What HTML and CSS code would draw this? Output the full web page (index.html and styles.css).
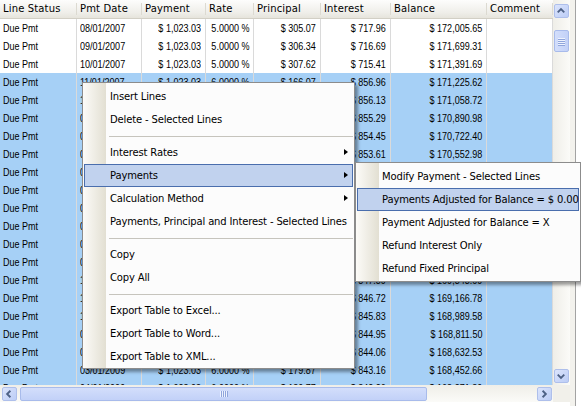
FILE: index.html
```html
<!DOCTYPE html>
<html>
<head>
<meta charset="utf-8">
<link rel="stylesheet" href="styles.css">
</head>
<body>
<div class="screen">
  <div class="grid">
    <div class="main">
      <div class="table">
        <div class="cols hdr">
          <span>Line Status</span><span>Pmt Date</span><span>Payment</span><span>Rate</span><span>Principal</span><span>Interest</span><span>Balance</span><span>Comment</span>
        </div>
        <div class="cols row"><span><b>Due Pmt</b></span><span><b>08/01/2007</b></span><span class="r"><b>$ 1,023.03</b></span><span class="r"><b>5.0000 %</b></span><span class="r"><b>$ 305.07</b></span><span class="r"><b>$ 717.96</b></span><span class="r"><b>$ 172,005.65</b></span><span></span></div>
        <div class="cols row"><span><b>Due Pmt</b></span><span><b>09/01/2007</b></span><span class="r"><b>$ 1,023.03</b></span><span class="r"><b>5.0000 %</b></span><span class="r"><b>$ 306.34</b></span><span class="r"><b>$ 716.69</b></span><span class="r"><b>$ 171,699.31</b></span><span></span></div>
        <div class="cols row"><span><b>Due Pmt</b></span><span><b>10/01/2007</b></span><span class="r"><b>$ 1,023.03</b></span><span class="r"><b>5.0000 %</b></span><span class="r"><b>$ 307.62</b></span><span class="r"><b>$ 715.41</b></span><span class="r"><b>$ 171,391.69</b></span><span></span></div>
        <div class="cols row sel"><span><b>Due Pmt</b></span><span><b>11/01/2007</b></span><span class="r"><b>$ 1,023.03</b></span><span class="r"><b>6.0000 %</b></span><span class="r"><b>$ 166.07</b></span><span class="r"><b>$ 856.96</b></span><span class="r"><b>$ 171,225.62</b></span><span></span></div>
        <div class="cols row sel"><span><b>Due Pmt</b></span><span><b>12/01/2007</b></span><span class="r"><b>$ 1,023.03</b></span><span class="r"><b>6.0000 %</b></span><span class="r"><b>$ 166.90</b></span><span class="r"><b>$ 856.13</b></span><span class="r"><b>$ 171,058.72</b></span><span></span></div>
        <div class="cols row sel"><span><b>Due Pmt</b></span><span><b>01/01/2008</b></span><span class="r"><b>$ 1,023.03</b></span><span class="r"><b>6.0000 %</b></span><span class="r"><b>$ 167.74</b></span><span class="r"><b>$ 855.29</b></span><span class="r"><b>$ 170,890.98</b></span><span></span></div>
        <div class="cols row sel"><span><b>Due Pmt</b></span><span><b>02/01/2008</b></span><span class="r"><b>$ 1,023.03</b></span><span class="r"><b>6.0000 %</b></span><span class="r"><b>$ 168.58</b></span><span class="r"><b>$ 854.45</b></span><span class="r"><b>$ 170,722.40</b></span><span></span></div>
        <div class="cols row sel"><span><b>Due Pmt</b></span><span><b>03/01/2008</b></span><span class="r"><b>$ 1,023.03</b></span><span class="r"><b>6.0000 %</b></span><span class="r"><b>$ 169.42</b></span><span class="r"><b>$ 853.61</b></span><span class="r"><b>$ 170,552.98</b></span><span></span></div>
        <div class="cols row sel"><span><b>Due Pmt</b></span><span><b>04/01/2008</b></span><span class="r"><b>$ 1,023.03</b></span><span class="r"><b>6.0000 %</b></span><span class="r"><b>$ 170.27</b></span><span class="r"><b>$ 852.76</b></span><span class="r"><b>$ 170,382.71</b></span><span></span></div>
        <div class="cols row sel"><span><b>Due Pmt</b></span><span><b>05/01/2008</b></span><span class="r"><b>$ 1,023.03</b></span><span class="r"><b>6.0000 %</b></span><span class="r"><b>$ 171.12</b></span><span class="r"><b>$ 851.91</b></span><span class="r"><b>$ 170,211.59</b></span><span></span></div>
        <div class="cols row sel"><span><b>Due Pmt</b></span><span><b>06/01/2008</b></span><span class="r"><b>$ 1,023.03</b></span><span class="r"><b>6.0000 %</b></span><span class="r"><b>$ 171.97</b></span><span class="r"><b>$ 851.06</b></span><span class="r"><b>$ 170,039.62</b></span><span></span></div>
        <div class="cols row sel"><span><b>Due Pmt</b></span><span><b>07/01/2008</b></span><span class="r"><b>$ 1,023.03</b></span><span class="r"><b>6.0000 %</b></span><span class="r"><b>$ 172.83</b></span><span class="r"><b>$ 850.20</b></span><span class="r"><b>$ 169,866.79</b></span><span></span></div>
        <div class="cols row sel"><span><b>Due Pmt</b></span><span><b>08/01/2008</b></span><span class="r"><b>$ 1,023.03</b></span><span class="r"><b>6.0000 %</b></span><span class="r"><b>$ 173.70</b></span><span class="r"><b>$ 849.33</b></span><span class="r"><b>$ 169,693.09</b></span><span></span></div>
        <div class="cols row sel"><span><b>Due Pmt</b></span><span><b>09/01/2008</b></span><span class="r"><b>$ 1,023.03</b></span><span class="r"><b>6.0000 %</b></span><span class="r"><b>$ 174.56</b></span><span class="r"><b>$ 848.47</b></span><span class="r"><b>$ 169,518.53</b></span><span></span></div>
        <div class="cols row sel"><span><b>Due Pmt</b></span><span><b>10/01/2008</b></span><span class="r"><b>$ 1,023.03</b></span><span class="r"><b>6.0000 %</b></span><span class="r"><b>$ 175.44</b></span><span class="r"><b>$ 847.59</b></span><span class="r"><b>$ 169,343.09</b></span><span></span></div>
        <div class="cols row sel"><span><b>Due Pmt</b></span><span><b>11/01/2008</b></span><span class="r"><b>$ 1,023.03</b></span><span class="r"><b>6.0000 %</b></span><span class="r"><b>$ 176.31</b></span><span class="r"><b>$ 846.72</b></span><span class="r"><b>$ 169,166.78</b></span><span></span></div>
        <div class="cols row sel"><span><b>Due Pmt</b></span><span><b>12/01/2008</b></span><span class="r"><b>$ 1,023.03</b></span><span class="r"><b>6.0000 %</b></span><span class="r"><b>$ 177.20</b></span><span class="r"><b>$ 845.83</b></span><span class="r"><b>$ 168,989.58</b></span><span></span></div>
        <div class="cols row sel"><span><b>Due Pmt</b></span><span><b>01/01/2009</b></span><span class="r"><b>$ 1,023.03</b></span><span class="r"><b>6.0000 %</b></span><span class="r"><b>$ 178.08</b></span><span class="r"><b>$ 844.95</b></span><span class="r"><b>$ 168,811.50</b></span><span></span></div>
        <div class="cols row sel"><span><b>Due Pmt</b></span><span><b>02/01/2009</b></span><span class="r"><b>$ 1,023.03</b></span><span class="r"><b>6.0000 %</b></span><span class="r"><b>$ 178.97</b></span><span class="r"><b>$ 844.06</b></span><span class="r"><b>$ 168,632.53</b></span><span></span></div>
        <div class="cols row sel"><span><b>Due Pmt</b></span><span><b>03/01/2009</b></span><span class="r"><b>$ 1,023.03</b></span><span class="r"><b>6.0000 %</b></span><span class="r"><b>$ 179.87</b></span><span class="r"><b>$ 843.16</b></span><span class="r"><b>$ 168,452.66</b></span><span></span></div>
        <div class="cols row sel"><span><b>Due Pmt</b></span><span><b>04/01/2009</b></span><span class="r"><b>$ 1,023.03</b></span><span class="r"><b>6.0000 %</b></span><span class="r"><b>$ 180.77</b></span><span class="r"><b>$ 842.26</b></span><span class="r"><b>$ 168,271.89</b></span><span></span></div>
      </div>
      <div class="vscroll">
        <div class="sbtn up"><svg width="15" height="14" viewBox="0 0 15 14"><polyline points="4,8.5 7.5,5 11,8.5" fill="none" stroke="#4d6185" stroke-width="2"/></svg></div>
        <div class="thumb vthumb"><i></i><i></i><i></i><i></i></div>
        <div class="sbtn down"><svg width="15" height="14" viewBox="0 0 15 14"><polyline points="4,5.5 7.5,9 11,5.5" fill="none" stroke="#4d6185" stroke-width="2"/></svg></div>
      </div>
    </div>
    <div class="hscroll">
      <div class="sbtn left"><svg width="15" height="14" viewBox="0 0 15 14"><polyline points="9,3.5 5.5,7 9,10.5" fill="none" stroke="#4d6185" stroke-width="2"/></svg></div>
      <div class="thumb hthumb"><i></i><i></i><i></i><i></i></div>
      <div class="track"></div>
      <div class="sbtn right"><svg width="15" height="14" viewBox="0 0 15 14"><polyline points="6,3.5 9.5,7 6,10.5" fill="none" stroke="#4d6185" stroke-width="2"/></svg></div>
      <div class="corner"></div>
    </div>
  </div>
  <div class="side"></div>

  <div class="menu mainmenu">
    <div class="item">Insert Lines</div>
    <div class="item">Delete - Selected Lines</div>
    <div class="sep"></div>
    <div class="item sub">Interest Rates</div>
    <div class="item sub hot">Payments</div>
    <div class="item sub">Calculation Method</div>
    <div class="item">Payments, Principal and Interest - Selected Lines</div>
    <div class="sep"></div>
    <div class="item">Copy</div>
    <div class="item">Copy All</div>
    <div class="sep"></div>
    <div class="item">Export Table to Excel...</div>
    <div class="item">Export Table to Word...</div>
    <div class="item">Export Table to XML...</div>
  </div>

  <div class="menu submenu">
    <div class="item">Modify Payment - Selected Lines</div>
    <div class="item hot">Payments Adjusted for Balance = $ 0.00</div>
    <div class="item">Payment Adjusted for Balance = X</div>
    <div class="item">Refund Interest Only</div>
    <div class="item">Refund Fixed Principal</div>
  </div>
</div>
</body>
</html>
```

FILE: styles.css
```css
* { box-sizing: border-box; }
html, body { margin: 0; padding: 0; }
body {
  width: 581px;
  height: 406px;
  overflow: hidden;
  background: #ffffff;
}
.screen {
  position: relative;
  display: flex;
  width: 581px;
  height: 406px;
  overflow: hidden;
}
.grid {
  width: 570px;
  display: flex;
  flex-direction: column;
}
.main {
  display: flex;
  height: 385px;
}
.table {
  width: 553px;
  height: 385px;
  overflow: hidden;
  background: #ffffff;
}
.cols {
  display: grid;
  grid-template-columns: 77px 65px 64px 48px 67px 70px 96px 66px;
}
.hdr {
  height: 19px;
  background: linear-gradient(#fdfdfc, #efeee9 70%, #e6e4dc);
  border-bottom: 1px solid #d2cfc5;
  font-family: "DejaVu Sans", sans-serif;
  font-size: 10px;
  letter-spacing: 0.15px;
  color: #000;
}
.hdr span {
  line-height: 18px;
  padding-left: 3px;
  white-space: nowrap;
  overflow: hidden;
  background: linear-gradient(#dcdad1, #dcdad1) no-repeat right 3px / 1px 12px;
}
.row {
  height: 18px;
  font-family: "Liberation Sans", Arial, sans-serif;
  font-size: 11px;
  line-height: 18px;
  color: #000;
}
.row span {
  display: flex;
  align-items: center;
  border-right: 1px solid #dadada;
  padding: 0 4px 0 3px;
  white-space: nowrap;
  overflow: hidden;
}
.row b {
  display: block;
  flex: none;
  font-weight: normal;
  transform: scaleX(0.82);
  transform-origin: left center;
}
.row .r { justify-content: flex-end; }
.row .r b { transform-origin: right center; }
.sel { background: #a6d0f6; }

/* scrollbars */
.vscroll {
  width: 17px;
  height: 385px;
  background: linear-gradient(to right, #efeee8, #fbfbf8);
  display: flex;
  flex-direction: column;
  padding-left: 1px;
}
.sbtn {
  width: 15px;
  height: 14px;
  border: 1px solid #aebfeb;
  border-radius: 2px;
  background: linear-gradient(135deg, #dbe4fc, #bccdf6);
  display: flex;
}
.sbtn svg { display: block; margin: -1px 0 0 -1px; }
.up { margin-top: 4px; }
.down { margin-top: auto; margin-bottom: 2px; }
.thumb {
  border: 1px solid #a8bbeb;
  border-radius: 2px;
  background: linear-gradient(to right, #d3defb, #c2d1f8);
  display: flex;
  justify-content: center;
  align-items: center;
}
.vthumb {
  width: 15px;
  height: 22px;
  margin-top: 12px;
  flex-direction: column;
  gap: 1px;
}
.vthumb i {
  display: block;
  width: 7px;
  height: 1px;
  background: #eef3fe;
  box-shadow: 0 1px 0 #8fa5dc;
}
.hscroll {
  height: 17px;
  display: flex;
  align-items: center;
  background: linear-gradient(#efeee8, #fbfbf8);
}
.left { margin-left: 2px; }
.hthumb {
  width: 407px;
  height: 14px;
  margin-left: 3px;
  gap: 1px;
  background: linear-gradient(#d3defb, #c2d1f8);
}
.hthumb i {
  display: block;
  width: 1px;
  height: 6px;
  background: #eef3fe;
  box-shadow: 1px 0 0 #8fa5dc;
}
.track { flex: 1; }
.right { margin-right: 1px; }
.corner {
  width: 17px;
  height: 17px;
  background: #f1f0ea;
}
.side {
  width: 6px;
  height: 406px;
  background: #f3f2ed;
  border-right: 1px solid #a3a3a3;
}

/* menus */
.menu {
  position: absolute;
  border: 1px solid #8c8c8c;
  background: linear-gradient(to right, #fcfbf8, #e2dfd2) no-repeat 0 0 / 23px 100%, #fcfcfc;
  box-shadow: 3px 3px 3px rgba(0, 0, 0, 0.38);
  font-family: "DejaVu Sans", sans-serif;
  font-size: 10px;
  letter-spacing: -0.15px;
  color: #000;
}
.mainmenu {
  left: 82px;
  top: 82px;
  width: 273px;
  padding: 2px 0 0;
}
.submenu {
  left: 355px;
  top: 162px;
  width: 226px;
  padding: 2px 0 1px;
}
.item {
  position: relative;
  height: 23px;
  line-height: 23px;
  padding-left: 26px;
  margin: 0 1px;
  white-space: nowrap;
}
.submenu .item { padding-left: 25px; }
.item.hot {
  background: #c1d2ee;
  box-shadow: inset 0 0 0 1px #4a6ead;
}
.item.sub::after {
  content: "";
  position: absolute;
  right: 5px;
  top: 8px;
  border-left: 4px solid #000;
  border-top: 3.5px solid transparent;
  border-bottom: 3.5px solid transparent;
}
.sep {
  height: 10px;
  background: linear-gradient(#c6c4bd, #c6c4bd) no-repeat 26px 5px / calc(100% - 27px) 1px;
}
```
